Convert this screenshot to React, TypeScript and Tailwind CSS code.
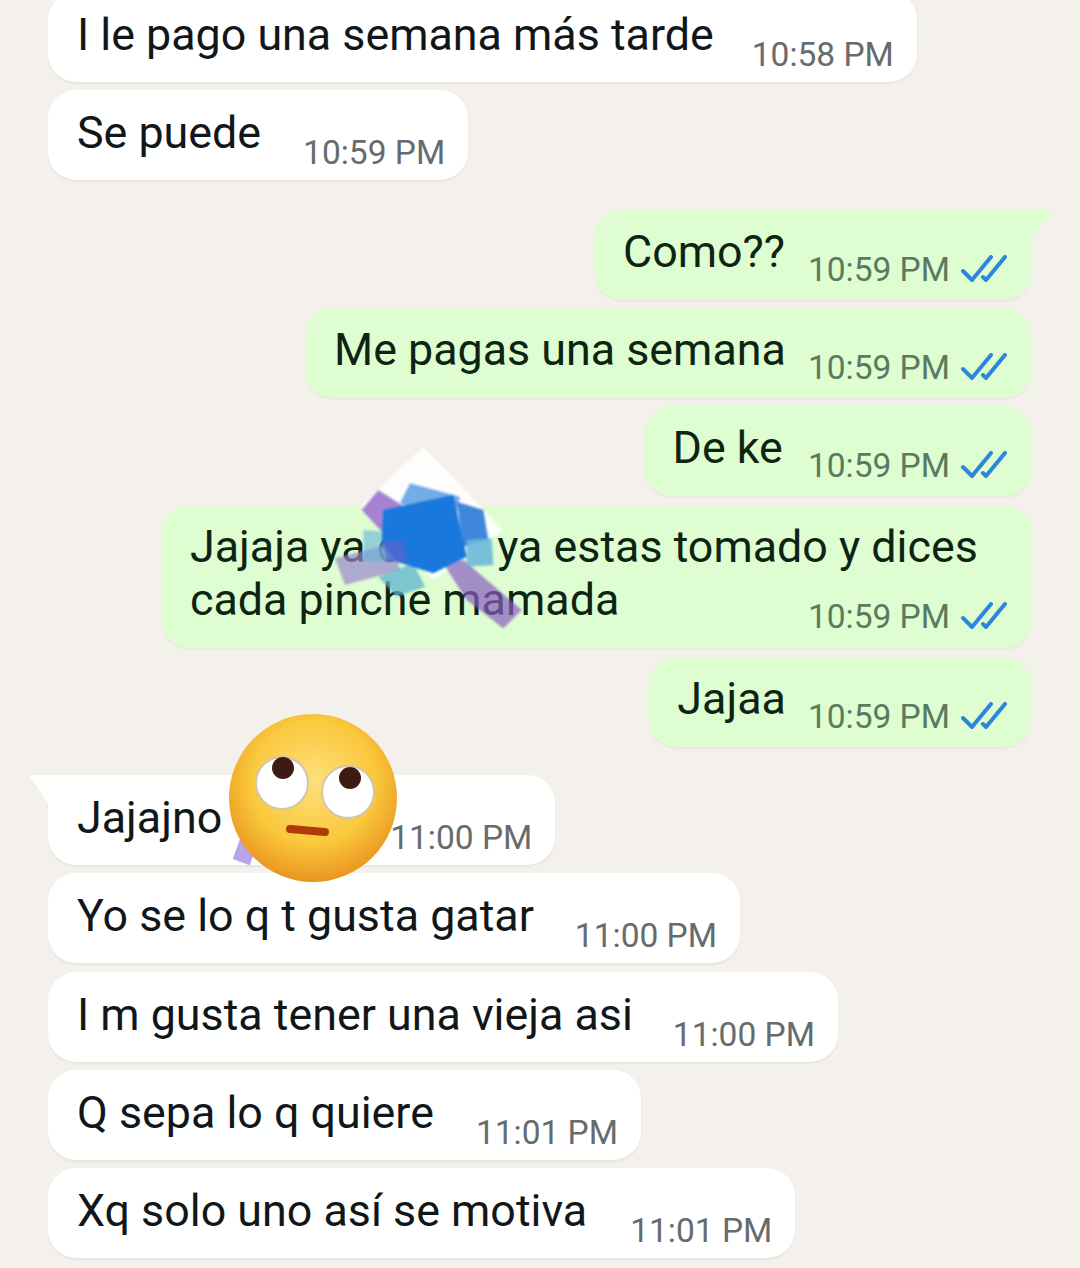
const DoubleCheck = () => (
  <svg viewBox="0 0 46 28" className="h-7 w-[46px] shrink-0 ml-[11px] mb-[7px]" fill="none" stroke="#2b86dc" strokeWidth="4" strokeLinecap="round" strokeLinejoin="round">
    <path d="M2 16L11 25L30 2" />
    <path d="M22 22L25 25L44 2" />
  </svg>
);

function Time({ time, sent }: { time: string; sent?: boolean }) {
  return (
    <div className={`flex items-end shrink-0 ${sent ? 'pb-[10px]' : 'pb-[7px]'}`}>
      <span className={`text-[33.5px] leading-[40px] whitespace-nowrap ${sent ? 'text-[#5a7a60]' : 'text-[#666b6e]'}`}>{time}</span>
      {sent && <DoubleCheck />}
    </div>
  );
}

function Received({ text, time, gap, className = '' }: { text: string; time: string; gap: number; className?: string }) {
  return (
    <div className={`self-start flex items-end bg-white rounded-[28px] pl-[29px] pr-[23px] shadow-[0_2px_2px_rgba(0,0,0,0.05)] ${className}`}>
      <div className="pt-[16px] pb-[21px] text-[44.8px] leading-[53px] text-[#111719] whitespace-nowrap">{text}</div>
      <div className="shrink-0" style={{ width: gap }} />
      <Time time={time} />
    </div>
  );
}

function Sent({ text, gap = 23, className = '' }: { text: string; gap?: number; className?: string }) {
  return (
    <div className={`self-end flex items-end bg-[#defdd0] rounded-[28px] pl-[29px] pr-[25px] shadow-[0_2px_2px_rgba(0,0,0,0.04)] ${className}`}>
      <div className="pt-[15px] pb-[22px] text-[44.8px] leading-[53px] text-[#0d2413] whitespace-nowrap">{text}</div>
      <div className="shrink-0" style={{ width: gap }} />
      <Time time="10:59 PM" sent />
    </div>
  );
}

function Mosaic() {
  return (
    <svg viewBox="0 0 780 660" className="absolute left-[300px] top-[430px] w-[260px] h-[220px] blur-[1px]">
      <polygon points="370,50 610,300 400,450 180,230" fill="#ffffff" opacity="0.85" />
      <polygon points="105,385 280,340 300,420 135,465" fill="#9a86cf" opacity="0.7" />
      <polygon points="190,300 300,310 290,395 190,395" fill="#63b4d8" opacity="0.6" />
      <polygon points="235,440 340,400 375,470 290,500" fill="#5cb3d0" opacity="0.75" />
      <polygon points="235,180 320,235 260,320 185,240" fill="#a583d2" />
      <polygon points="430,400 490,390 665,540 610,595 500,510" fill="#8a5cc0" opacity="0.7" />
      <polygon points="330,160 480,200 460,290 300,220" fill="#74ace6" />
      <polygon points="470,215 550,240 565,330 490,350" fill="#3f86dc" />
      <polygon points="500,330 575,325 580,405 500,410" fill="#6db8d8" opacity="0.9" />
      <polygon points="250,240 460,195 500,380 400,430 290,395 245,340" fill="#1878dc" />
      <polygon points="245,335 310,330 320,395 262,395" fill="#5b62cc" opacity="0.7" />
    </svg>
  );
}

function RollingEyes() {
  return (
    <svg viewBox="0 0 170 170" className="absolute left-[228px] top-[713px] w-[170px] h-[170px]">
      <defs>
        <radialGradient id="face" cx="50%" cy="40%" r="62%">
          <stop offset="0%" stopColor="#fde07a" />
          <stop offset="60%" stopColor="#fac83c" />
          <stop offset="100%" stopColor="#e8901c" />
        </radialGradient>
      </defs>
      <circle cx="85" cy="85" r="84" fill="url(#face)" />
      <circle cx="54" cy="70" r="26" fill="#fff" stroke="#cfc6b2" strokeWidth="2" />
      <circle cx="120" cy="79" r="26" fill="#fff" stroke="#cfc6b2" strokeWidth="2" />
      <circle cx="55" cy="55" r="11" fill="#3d1a12" />
      <circle cx="122" cy="65" r="11" fill="#3d1a12" />
      <path d="M62 116L97 119" stroke="#b03a08" strokeWidth="8" strokeLinecap="round" />
    </svg>
  );
}

export default function App() {
  return (
    <div className="relative h-[1268px] w-[1080px] overflow-hidden bg-[#f4f1ec] font-['Roboto',sans-serif]">
      <div className="flex flex-col px-[48px] -mt-[8px]">
        <Received text="I le pago una semana más tarde" time="10:58 PM" gap={38} />
        <Received text="Se puede" time="10:59 PM" gap={42} className="mt-[8px]" />

        <div className="relative self-end mt-[30px]">
          <Sent text="Como??" />
          <svg viewBox="0 0 50 32" className="absolute -right-[20px] top-0 w-[50px] h-[32px]">
            <path d="M0 0H46Q52 0 48 5L30 28V32H0Z" fill="#defdd0" />
          </svg>
        </div>
        <Sent text="Me pagas una semana" gap={22} className="mt-[8px]" />
        <Sent text="De ke" gap={25} className="mt-[8px]" />
        <div className="self-end mt-[9px] w-[871px] flex flex-col bg-[#defdd0] rounded-[28px] pl-[29px] pr-[25px] pb-[1px] shadow-[0_2px_2px_rgba(0,0,0,0.04)]">
          <div className="pt-[15px] -mb-[29px] text-[44.8px] leading-[53px] text-[#0d2413]">
            Jajaja ya c<span className="inline-block w-[97px]" />ya estas tomado y dices
            <br />
            cada pinche mamada
          </div>
          <div className="self-end">
            <Time time="10:59 PM" sent />
          </div>
        </div>
        <Sent text="Jajaa" gap={22} className="mt-[9px]" />

        <div className="relative self-start mt-[28px]">
          <Received text="Jajajno" time="11:00 PM" gap={168} />
          <svg viewBox="0 0 50 32" className="absolute -left-[18px] top-0 w-[50px] h-[32px]">
            <path d="M50 0H4Q-2 0 2 5L18 28V32H50Z" fill="#ffffff" />
          </svg>
        </div>
        <Received text="Yo se lo q t gusta gatar" time="11:00 PM" gap={41} className="mt-[8px]" />
        <Received text="I m gusta tener una vieja asi" time="11:00 PM" gap={40} className="mt-[9px]" />
        <Received text="Q sepa lo q quiere" time="11:01 PM" gap={42} className="mt-[8px]" />
        <Received text="Xq solo uno así se motiva" time="11:01 PM" gap={43} className="mt-[8px]" />
      </div>

      <Mosaic />
      <div className="absolute left-[237px] top-[835px] w-[18px] h-[28px] rotate-[20deg] bg-[#b7a4ec]" />
      <RollingEyes />
    </div>
  );
}
